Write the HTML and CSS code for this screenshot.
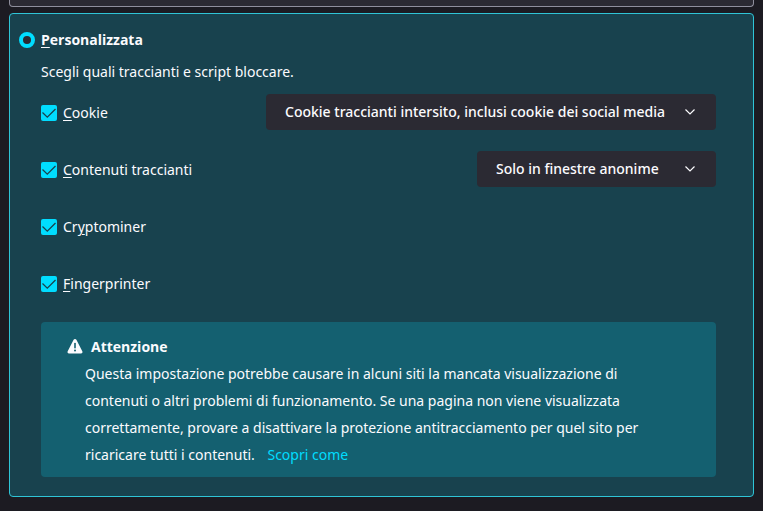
FILE: index.html
```
<!DOCTYPE html>
<html lang="it">
<head>
    <meta charset="UTF-8">
    <meta name="viewport" content="width=device-width, initial-scale=1.0">
    <title>Protezione antitracciamento</title>
    <link rel="stylesheet" href="styles.css">
</head>
<body>
    <div class="previous-option"></div>

    <section class="option-card">
        <div class="option-header">
            <input type="radio" class="radio" id="custom" name="protection" checked>
            <label for="custom"><u>P</u>ersonalizzata</label>
        </div>

        <div class="option-body">
            <p class="description">Scegli quali traccianti e script bloccare.</p>

            <div class="tracker-list">
                <div class="tracker">
                    <div class="tracker-label">
                        <input type="checkbox" class="checkbox" id="cookies" checked>
                        <label for="cookies"><u>C</u>ookie</label>
                    </div>
                    <div class="select-box select-wide">
                        <select aria-label="Cookie da bloccare">
                            <option>Cookie traccianti intersito, inclusi cookie dei social media</option>
                        </select>
                        <svg class="chevron" viewBox="0 0 12 12"><path d="M1.5 3.5 L6 8 L10.5 3.5"/></svg>
                    </div>
                </div>
                <div class="tracker">
                    <div class="tracker-label">
                        <input type="checkbox" class="checkbox" id="content" checked>
                        <label for="content"><u>C</u>ontenuti traccianti</label>
                    </div>
                    <div class="select-box select-narrow">
                        <select aria-label="Dove bloccare i contenuti traccianti">
                            <option>Solo in finestre anonime</option>
                        </select>
                        <svg class="chevron" viewBox="0 0 12 12"><path d="M1.5 3.5 L6 8 L10.5 3.5"/></svg>
                    </div>
                </div>
                <div class="tracker">
                    <div class="tracker-label">
                        <input type="checkbox" class="checkbox" id="miners" checked>
                        <label for="miners">Cr<u>y</u>ptominer</label>
                    </div>
                </div>
                <div class="tracker">
                    <div class="tracker-label">
                        <input type="checkbox" class="checkbox" id="fingerprint" checked>
                        <label for="fingerprint"><u>F</u>ingerprinter</label>
                    </div>
                </div>
            </div>

            <div class="warning">
                <div class="warning-title">
                    <svg class="warning-icon" viewBox="0 0 16 16">
                        <path class="triangle" d="M8 0 C8.6 0 9.1 0.3 9.4 0.8 L15.3 12.3 C15.9 13.4 15.2 14.5 14 14.5 H2 C0.8 14.5 0.1 13.4 0.7 12.3 L6.6 0.8 C6.9 0.3 7.4 0 8 0 Z"/>
                        <path class="mark" d="M8 4.5 V8.7"/>
                        <circle class="dot" cx="8" cy="11.5" r="1"/>
                    </svg>
                    <strong>Attenzione</strong>
                </div>
                <p>Questa impostazione potrebbe causare in alcuni siti la mancata visualizzazione di contenuti o altri problemi di funzionamento. Se una pagina non viene visualizzata correttamente, provare a disattivare la protezione antitracciamento per quel sito per ricaricare tutti i contenuti. <a href="#">Scopri come</a></p>
            </div>
        </div>
    </section>
</body>
</html>
```
FILE: styles.css
```
/* General Reset */
* {
    margin: 0;
    padding: 0;
    box-sizing: border-box;
}

body {
    font-family: "Segoe UI", "Noto Sans", sans-serif;
    font-size: 14px;
    line-height: 28px;
    color: #fbfbfe;
    background-color: #1c1b22;
    padding: 0 9px 14px;
}

/* Bottom of the option above */
.previous-option {
    height: 7px;
    margin-bottom: 6px;
    background-color: #2b2a33;
    border: 1px solid #8f8f9d;
    border-top: none;
    border-radius: 0 0 4px 4px;
}

/* Option Card */
.option-card {
    padding: 12px 37px 19px 9px;
    background-color: #18424e;
    border: 1px solid #2fc4d6;
    border-radius: 4px;
}

.option-header {
    display: flex;
    align-items: center;
    gap: 6px;
    font-family: "Segoe UI", "Open Sans", sans-serif;
    font-weight: bold;
}

.option-body {
    padding-left: 22px;
}

.description {
    margin: 4px 0 8px;
}

u {
    text-underline-offset: 2px;
}

/* Radio and Checkbox */
.radio {
    appearance: none;
    width: 16px;
    height: 16px;
    border: 4px solid #00ddff;
    border-radius: 50%;
    background-color: #2b2a33;
}

.checkbox {
    appearance: none;
    width: 16px;
    height: 16px;
    border-radius: 2px;
    background: #00ddff url("data:image/svg+xml,%3Csvg xmlns='http://www.w3.org/2000/svg' viewBox='0 0 16 16'%3E%3Cpath d='M1.5 7.5 L6.3 12.2 L14.5 4' fill='none' stroke='%2318424e' stroke-width='1.3'/%3E%3C/svg%3E");
}

/* Tracker Rows */
.tracker-list {
    display: grid;
    gap: 21px;
}

.tracker {
    display: flex;
    justify-content: space-between;
    align-items: center;
    min-height: 36px;
}

.tracker-label {
    display: flex;
    align-items: center;
    gap: 6px;
    padding-top: 2px;
}

/* Drop-downs */
.select-box {
    display: grid;
    align-items: center;
}

.select-box > * {
    grid-area: 1 / 1;
}

.select-wide {
    width: 450px;
}

.select-narrow {
    width: 239px;
}

select {
    appearance: none;
    width: 100%;
    height: 36px;
    padding: 0 40px 0 19px;
    font: inherit;
    font-weight: 500;
    color: #fbfbfe;
    background-color: #2b2a33;
    border: none;
    border-radius: 4px;
}

.chevron {
    justify-self: end;
    width: 12px;
    height: 12px;
    margin-right: 20px;
    fill: none;
    stroke: #fbfbfe;
    stroke-width: 1.2;
    pointer-events: none;
}

/* Warning Box */
.warning {
    margin-top: 21px;
    padding: 11px 44px 9px;
    line-height: 27px;
    background-color: #146070;
    border-radius: 4px;
}

.warning-title {
    display: flex;
    align-items: center;
    gap: 8px;
    margin-left: -18px;
    font-family: "Segoe UI", "Open Sans", sans-serif;
}

.warning-icon {
    width: 16px;
    height: 16px;
}

.triangle {
    fill: #fbfbfe;
}

.mark {
    stroke: #146070;
    stroke-width: 1.6;
    stroke-linecap: round;
}

.dot {
    fill: #146070;
}

a {
    margin-left: 9px;
    color: #00ddff;
    text-decoration: none;
}

a:hover {
    text-decoration: underline;
}
```
